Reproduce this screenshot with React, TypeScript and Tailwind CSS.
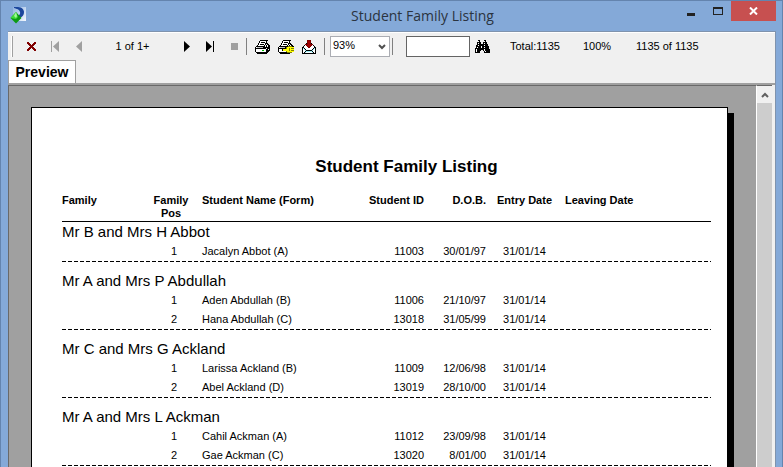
import { clsx } from "clsx";
import type { ReactNode } from "react";

type Student = {
  pos: number;
  name: string;
  id: string;
  dob: string;
  entry: string;
  leaving?: string;
};

type Family = {
  name: string;
  students: Student[];
};

const families: Family[] = [
  {
    name: "Mr B and Mrs H Abbot",
    students: [
      { pos: 1, name: "Jacalyn Abbot (A)", id: "11003", dob: "30/01/97", entry: "31/01/14" },
    ],
  },
  {
    name: "Mr A and Mrs P Abdullah",
    students: [
      { pos: 1, name: "Aden Abdullah (B)", id: "11006", dob: "21/10/97", entry: "31/01/14" },
      { pos: 2, name: "Hana Abdullah (C)", id: "13018", dob: "31/05/99", entry: "31/01/14" },
    ],
  },
  {
    name: "Mr C and Mrs G Ackland",
    students: [
      { pos: 1, name: "Larissa Ackland (B)", id: "11009", dob: "12/06/98", entry: "31/01/14" },
      { pos: 2, name: "Abel Ackland (D)", id: "13019", dob: "28/10/00", entry: "31/01/14" },
    ],
  },
  {
    name: "Mr A and Mrs L Ackman",
    students: [
      { pos: 1, name: "Cahil Ackman (A)", id: "11012", dob: "23/09/98", entry: "31/01/14" },
      { pos: 2, name: "Gae Ackman (C)", id: "13020", dob: "8/01/00", entry: "31/01/14" },
    ],
  },
];

const palette: Record<string, string> = {
  k: "#000000",
  w: "#ffffff",
  g: "#00c000",
  s: "#c0c0c0",
  y: "#ffff00",
  o: "#808000",
  c: "#a0f0f8",
  r: "#a00000",
  m: "#800000",
};

// one character per pixel, "." is transparent
const printer = [
  ".....kkkkkkkk...",
  "....kwwwwwwk....",
  "....kwkkkkwk....",
  "...kwwwwwwkkk...",
  "...kwkkkkwkwkk..",
  "..kwwwwwwkwkwkk.",
  ".kkkkkkkkkwkwkk.",
  "kwsssssskkkkkkk.",
  "kkkkkkkkkkkwkkk.",
  "kwwwwwwwwwwkkwk.",
  "kwwwwwwggwwkkkk.",
  "kwwwwwwwwwwkkk..",
  ".kkkkkkkkkkkk...",
  "..kkkkkkkkkk....",
];

const printerSetup = [
  ".....kkkkkkkk...",
  "....kwwwwwwk....",
  "....kwkkkkwk....",
  "...kwwwwwwkkk...",
  "...kwkkkkwkwkk..",
  "..kwwwwwwkwkwkk.",
  ".kkkkkkkkkooookk",
  "kwssssskoyyyyyyy",
  "kkkkkkkkoyyoyooo",
  "kwwwkyyyyyyoyyyy",
  "kwwwkyyyyyyoyooo",
  "kwwwwwwwoyyyyyyy",
  ".kkkkkkkkooooo..",
  "..kkkkkkkkkk....",
];

const mail = [
  ".....mmmm.....",
  ".....mrrm.....",
  ".....mrrm.....",
  "....kmrrmk....",
  "...mmmrrmmm...",
  "..kwmrrrrmwk..",
  ".kwwwmrrmwwwk.",
  "kkwwwwmmwwwwkk",
  "kckwwwwwwwwkck",
  "kwckwwwwwwkcwk",
  "kwwckkkkkkcwwk",
  "kwwkcccccckwwk",
  "kwkcwwwwwwckwk",
  "kkkkkkkkkkkkkk",
];

const binoculars = [
  "...kk....kk....",
  "...wk....wk....",
  "..kkkk..kkkk...",
  "..kwkk..kwkk...",
  "..kkkkkkkkkkk..",
  ".kkwkkkkkwkkk..",
  ".kkkkkwkkkkkkk.",
  ".kwkkkwkkwkkkk.",
  "kkkkkkkkkkkkkk.",
  "kwkkkkkkkwkkkkk",
  "kwkkkk..kwkkkkk",
  "kwkkk....kwkkkk",
  "kkkkk....kkkkkk",
];

const cross = [
  "mm.....mm",
  "mmm...mmm",
  ".mmm.mmm.",
  "..mmmmm..",
  "...mmm...",
  "..mmmmm..",
  ".mmm.mmm.",
  "mmm...mmm",
  "mm.....mm",
];

function PixelIcon({ rows }: { rows: string[] }) {
  return (
    <svg width={rows[0].length} height={rows.length} shapeRendering="crispEdges" aria-hidden>
      {rows.flatMap((row, y) =>
        [...row].map((pixel, x) =>
          pixel === "." ? null : (
            <rect key={`${x}-${y}`} x={x} y={y} width={1} height={1} fill={palette[pixel]} />
          ),
        ),
      )}
    </svg>
  );
}

function Glyph({ d, fill }: { d: string; fill: string }) {
  return (
    <svg width={11} height={11} aria-hidden>
      <path d={d} fill={fill} />
    </svg>
  );
}

function AppIcon() {
  return (
    <svg width={17} height={17} aria-hidden>
      <defs>
        <linearGradient id="tile" x1="0" y1="0" x2="1" y2="1">
          <stop offset="0" stopColor="#8fb2e0" />
          <stop offset="1" stopColor="#f4f8fd" />
        </linearGradient>
      </defs>
      <rect x="3" y="0" width="13" height="14" fill="url(#tile)" />
      <path d="M4 0H8C12 0 14 3 14 5C14 9 11 11 8 11V9C10 8 10.500 6 10 5C9 2 7 2 4 1Z" fill="#1b469c" />
      <path d="M6 5L11.500 11L6 16.500L0.500 11Z" fill="#0c9a14" />
      <path d="M6 5L8 10L6 12L0.500 11Z" fill="#3fdc3a" />
      <path d="M6 5L7 9L6 11L4 9Z" fill="#a4f89a" />
    </svg>
  );
}

function ToolButton({
  label,
  wide,
  disabled,
  children,
}: {
  label: string;
  wide?: boolean;
  disabled?: boolean;
  children: ReactNode;
}) {
  return (
    <button
      type="button"
      aria-label={label}
      title={label}
      disabled={disabled}
      className={clsx("flex h-5 shrink-0 items-center justify-center", wide ? "w-6" : "w-[23px]")}
    >
      {children}
    </button>
  );
}

function Separator() {
  return <span className="h-[17px] w-px shrink-0 bg-[#808080]" />;
}

function TitleBar() {
  return (
    <header className="flex h-[30px] shrink-0 items-start pl-[9px]">
      <span className="mt-1.5 shrink-0">
        <AppIcon />
      </span>
      <h1 className="flex-1 pl-[141px] text-center font-['Open_Sans',sans-serif] text-[14px] leading-[29px] text-[#2b3440]">
        Student Family Listing
      </h1>
      <button type="button" aria-label="Minimize" className="flex h-5 w-[27px] items-center justify-center">
        <span className="mt-1.5 h-[3px] w-2 bg-[#222]" />
      </button>
      <button type="button" aria-label="Maximize" className="flex h-5 w-[27px] items-center justify-center">
        <span className="h-2 w-2.5 border border-t-2 border-[#222]" />
      </button>
      <button
        type="button"
        aria-label="Close"
        className="flex h-5 w-[45px] items-center justify-center bg-[#c75050]"
      >
        <svg width="9" height="8" aria-hidden>
          <path d="M1 0.5L8 7.5M8 0.5L1 7.5" stroke="#fff" strokeWidth="2" />
        </svg>
      </button>
    </header>
  );
}

function Toolbar() {
  return (
    <div
      role="toolbar"
      className="flex h-[27px] shrink-0 items-center pl-[3px] font-['Liberation_Sans',sans-serif] text-[11px] text-black"
    >
      <span className="mr-[6px] h-[21px] w-0.5 shrink-0 border-r border-[#a0a0a0] bg-white" />
      <ToolButton label="Close preview" wide>
        <PixelIcon rows={cross} />
      </ToolButton>
      <ToolButton label="First page" wide disabled>
        <Glyph d="M1 0H2V11H1ZM9 0V11L3 5.5Z" fill="#a0a0a0" />
      </ToolButton>
      <ToolButton label="Previous page" wide disabled>
        <Glyph d="M8 0V11L2 5.5Z" fill="#a0a0a0" />
      </ToolButton>
      <span className="w-[83px] shrink-0 text-center">1 of 1+</span>
      <ToolButton label="Next page" wide>
        <Glyph d="M3 0V11L9 5.5Z" fill="#000" />
      </ToolButton>
      <ToolButton label="Last page" wide>
        <Glyph d="M1 0V11L7 5.5ZM8 0H9V11H8Z" fill="#000" />
      </ToolButton>
      <ToolButton label="Stop" wide disabled>
        <Glyph d="M2 2H9V9H2Z" fill="#a0a0a0" />
      </ToolButton>
      <Separator />
      <div className="flex px-1">
        <ToolButton label="Print">
          <PixelIcon rows={printer} />
        </ToolButton>
        <ToolButton label="Print setup">
          <PixelIcon rows={printerSetup} />
        </ToolButton>
        <ToolButton label="Export">
          <PixelIcon rows={mail} />
        </ToolButton>
      </div>
      <Separator />
      <div className="relative mr-[2px] ml-[5px] shrink-0">
        <select
          aria-label="Zoom"
          defaultValue="93%"
          className="block h-[21px] w-[60px] appearance-none border border-[#abadb3] bg-white pb-0.5 pl-0.5"
        >
          <option>93%</option>
          <option>100%</option>
        </select>
        <svg width="8" height="6" className="pointer-events-none absolute top-2 right-1" aria-hidden>
          <path d="M1 1L4 4L7 1" fill="none" stroke="#505050" strokeWidth="2" />
        </svg>
      </div>
      <Separator />
      <input
        type="text"
        aria-label="Search text"
        className="ml-[13px] h-[21px] w-16 shrink-0 border border-[#646464] bg-white px-1"
      />
      <ToolButton label="Find" wide>
        <PixelIcon rows={binoculars} />
      </ToolButton>
      <span className="ml-4 w-[73px] shrink-0">Total:1135</span>
      <span className="w-[53px] shrink-0">100%</span>
      <span className="shrink-0">1135 of 1135</span>
    </div>
  );
}

function ReportTable() {
  return (
    <table className="w-full table-fixed border-collapse text-[11px] leading-[13px]">
      <colgroup>
        <col className="w-[90px]" />
        <col className="w-[38px]" />
        <col className="w-[168px]" />
        <col className="w-[66px]" />
        <col className="w-[62px]" />
        <col className="w-[77px]" />
        <col />
      </colgroup>
      <thead>
        <tr className="border-b border-black text-left align-top whitespace-nowrap">
          <th className="pb-px">Family</th>
          <th className="pb-px text-center">
            Family
            <br />
            Pos
          </th>
          <th className="pl-3">Student Name (Form)</th>
          <th className="text-right">Student ID</th>
          <th className="text-right">D.O.B.</th>
          <th className="text-center">Entry Date</th>
          <th className="pl-0.5">Leaving Date</th>
        </tr>
      </thead>
      {families.map((family, index) => (
        <tbody key={family.name}>
          <tr className={clsx("align-bottom", index === 0 ? "h-5" : "h-[29px]")}>
            <th colSpan={7} scope="rowgroup" className="text-left text-[15px] leading-5 font-normal">
              {family.name}
            </th>
          </tr>
          {family.students.map((student) => (
            <tr key={student.id} className="h-[19px]">
              <td />
              <td className="pl-1.5 text-center">{student.pos}</td>
              <td className="pl-3">{student.name}</td>
              <td className="text-right">{student.id}</td>
              <td className="text-right">{student.dob}</td>
              <td className="text-center">{student.entry}</td>
              <td>{student.leaving}</td>
            </tr>
          ))}
          <tr>
            <td
              colSpan={7}
              className="h-px bg-[repeating-linear-gradient(90deg,#000_0_4px,transparent_4px_6px)] p-0"
            />
          </tr>
        </tbody>
      ))}
    </table>
  );
}

export default function App() {
  return (
    <div className="flex h-screen flex-col overflow-hidden border border-b-0 border-[#6484ae] bg-[#84a9d8] pr-[6px]">
      <TitleBar />
      <div className="ml-[7px] flex min-h-0 flex-1 flex-col border-t border-r border-[#7f93ad] bg-[#f0f0f0]">
        <div className="h-px shrink-0 bg-white" />
        <Toolbar />
        <div role="tablist" className="flex h-[23px] shrink-0">
          <button
            type="button"
            role="tab"
            aria-selected
            className="w-[68px] border border-b-0 border-[#a0a0a0] bg-white font-['Liberation_Sans',sans-serif] text-[14px] leading-[20px] font-bold text-black"
          >
            Preview
          </button>
        </div>
        <div className="flex min-h-0 flex-1 border-t-2 border-[#a0a0a0] pr-[3px]">
          <main className="flex min-w-0 flex-1 overflow-hidden border-t border-l border-[#696969] bg-[#a0a0a0] pt-[21px] pr-7 pl-[22px]">
            <div className="flex-1 border border-b-0 border-black bg-white pr-4 pl-[30px] font-['Liberation_Sans',sans-serif] text-black shadow-[6px_6px_0_#000]">
              <h2 className="pt-[49px] pb-[17px] pl-10 text-center text-[17px] leading-5 font-bold">
                Student Family Listing
              </h2>
              <ReportTable />
            </div>
          </main>
          <div className="flex w-4 flex-col border-t border-l border-t-[#696969] border-l-white bg-[#cdcdcd]">
            <button
              type="button"
              aria-label="Scroll up"
              className="flex h-[17px] items-center justify-center bg-[#f0f0f0]"
            >
              <svg width="8" height="6" aria-hidden>
                <path d="M1 5L4 2L7 5" fill="none" stroke="#606060" strokeWidth="2" />
              </svg>
            </button>
          </div>
        </div>
      </div>
    </div>
  );
}
